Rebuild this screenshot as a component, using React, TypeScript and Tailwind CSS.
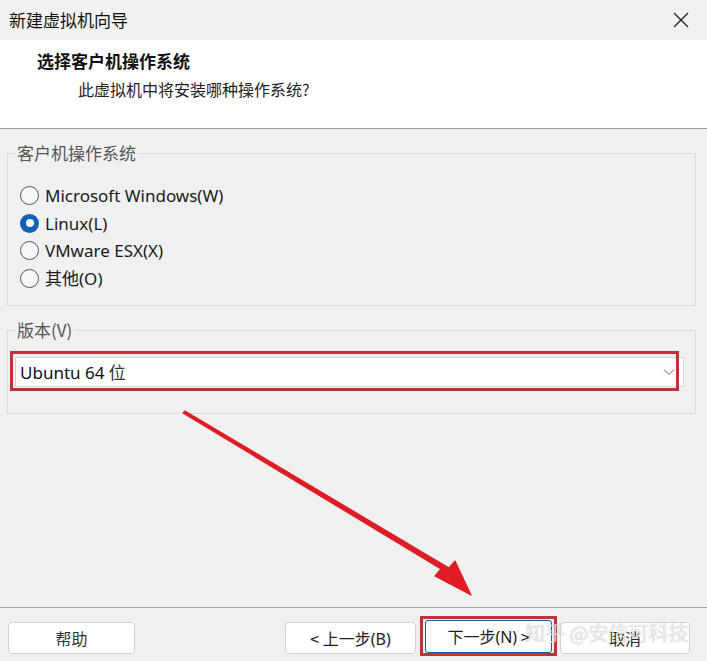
import React from "react";

const ui = { fontFamily: '"Noto Sans", "Noto Sans CJK SC", sans-serif' };
const cjk = { fontFamily: '"Noto Sans CJK SC", "Noto Sans", sans-serif' };

function Radio({ label, checked }: { label: string; checked?: boolean }) {
  return (
    <div className="flex items-center h-[27.5px]">
      {checked ? (
        <span className="w-[19px] h-[19px] rounded-full bg-[#0f62b5] flex items-center justify-center">
          <span className="w-[8px] h-[8px] rounded-full bg-white" />
        </span>
      ) : (
        <span className="w-[19px] h-[19px] rounded-full border border-[#555] bg-[#f7f7f7]" />
      )}
      <span className="ml-[6px] text-[17px] text-[#1a1a1a]" style={ui}>
        {label}
      </span>
    </div>
  );
}

function GroupBox({ title, children, className }: { title: string; children: React.ReactNode; className?: string }) {
  return (
    <div className={"relative border border-[#dcdcdc] ml-[7px] mr-[11px] " + (className ?? "")}>
      <span className="absolute -top-[13px] left-[8px] px-[1px] bg-[#f0f0f0] text-[17px] leading-[24px] text-[#555]" style={cjk}>
        {title}
      </span>
      {children}
    </div>
  );
}

export default function App() {
  return (
    <div className="relative w-[707px] h-[661px] bg-[#f0f0f0] overflow-hidden" style={cjk}>
      {/* Title bar */}
      <div className="h-[40px] bg-[#f3f1f0] flex items-center justify-between">
        <span className="ml-[9px] text-[17px] text-[#111]">新建虚拟机向导</span>
        <svg width="16" height="16" viewBox="0 0 16 16" className="mr-[18px]">
          <path d="M1 1 L15 15 M15 1 L1 15" stroke="#222" strokeWidth="1.4" />
        </svg>
      </div>

      {/* Header */}
      <div className="h-[89px] bg-white border-b border-[#a0a0a0]">
        <div className="pl-[37px] pt-[8px] text-[17px] font-bold text-[#111] leading-[26px]">选择客户机操作系统</div>
        <div className="pl-[78px] pt-[2px] text-[16px] text-[#222] leading-[26px]">此虚拟机中将安装哪种操作系统?</div>
      </div>

      {/* Guest OS group */}
      <GroupBox title="客户机操作系统" className="mt-[24px] h-[153px]">
        <div className="pl-[12px] pt-[28px]">
          <Radio label="Microsoft Windows(W)" />
          <Radio label="Linux(L)" checked />
          <Radio label="VMware ESX(X)" />
          <Radio label="其他(O)" />
        </div>
      </GroupBox>

      {/* Version group */}
      <GroupBox title="版本(V)" className="mt-[24px] h-[84px]">
        <div className="relative mt-[26px] ml-[7px] mr-[11px] h-[30px] bg-white border border-[#d6d6d6] flex items-center justify-between">
          <span className="pl-[4px] text-[17px] text-[#111]" style={ui}>
            Ubuntu 64 <span style={cjk} className="text-[#333]">位</span>
          </span>
          <svg width="12" height="8" viewBox="0 0 12 8" className="mr-[8px]">
            <path d="M1 1.5 L6 6.5 L11 1.5" fill="none" stroke="#666" strokeWidth="1" />
          </svg>
          <div className="absolute -left-[6px] -top-[7px] w-[669px] h-[40px] border-[3px] border-[#c4303a]" />
        </div>
      </GroupBox>

      {/* Footer */}
      <div className="absolute left-0 right-0 top-[607px] border-t border-[#a8a8a8]">
        <div className="flex items-start px-[8px] pt-[14px]">
          <button className="w-[127px] h-[32px] bg-white border border-[#d0d0d0] rounded-[4px] text-[16px] leading-[20px] text-[#333]">帮助</button>
          <div className="ml-auto flex items-start">
            <button className="w-[131px] h-[32px] bg-white border border-[#d0d0d0] rounded-[4px] text-[16px] leading-[20px] text-[#222]">
              &lt; 上一步<span style={ui}>(B)</span>
            </button>
            <div className="ml-[4px] -mt-[6px] border-[3px] border-[#c4303a] pt-[1px] px-[2px] pb-[0px]">
              <button className="w-[127px] h-[33px] bg-white border border-[#0a5fb4] rounded-[3px] text-[16px] leading-[20px] text-[#222]">
                下一步<span style={ui}>(N)</span> &gt;
              </button>
            </div>
            <button className="ml-[3px] mr-[9px] w-[130px] h-[32px] bg-white border border-[#d0d0d0] rounded-[4px] text-[16px] leading-[20px] text-[#222]">取消</button>
          </div>
        </div>
      </div>

      {/* Annotation arrow */}
      <svg className="absolute left-0 top-0 pointer-events-none" width="707" height="661">
        <path d="M183 413 L441 569 L435 576 L471 595 L455 561 L449 568 L185 411 Z" fill="#e01b24" stroke="#d8202a" strokeWidth="1.2" strokeLinejoin="round" />
      </svg>

      {/* Watermark */}
      <div className="absolute left-[525px] top-[618px] text-[20px] text-white/75 pointer-events-none" style={{ ...cjk, textShadow: "0 0 1px rgba(0,0,0,0.35)" }}>
        知乎 @安信可科技
      </div>
    </div>
  );
}
